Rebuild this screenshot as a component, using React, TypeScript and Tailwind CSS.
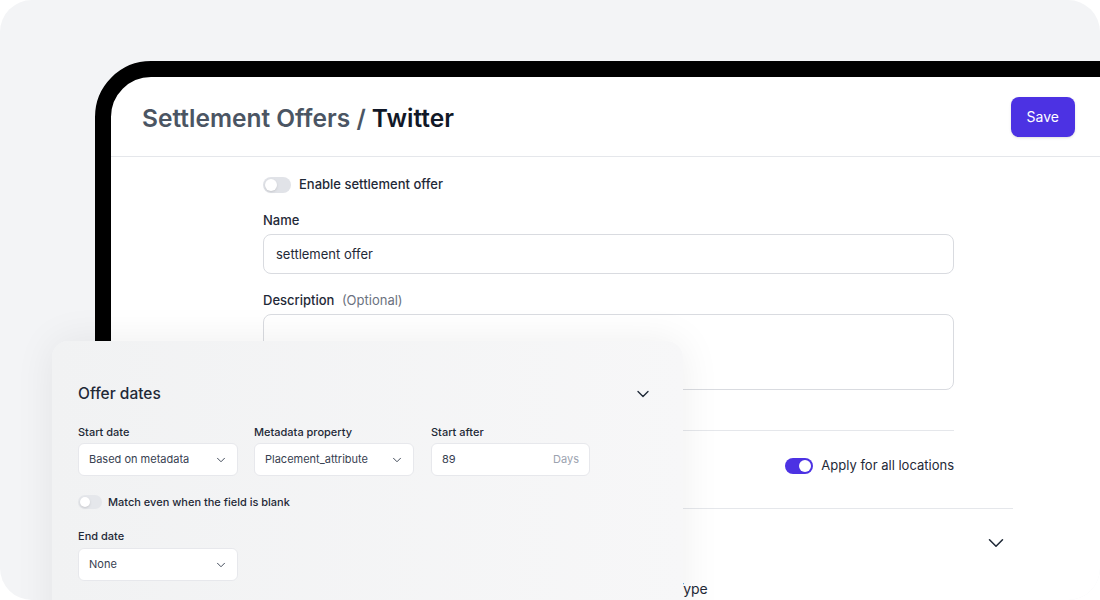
import React from "react";
import { ChevronDown } from "lucide-react";

function Toggle({ on = false, small = false }: { on?: boolean; small?: boolean }) {
  if (small) {
    return (
      <div className="relative h-[14px] w-[24px] shrink-0 rounded-full bg-[#e5e7eb]">
        <div className="absolute left-[2px] top-[2px] h-[10px] w-[10px] rounded-full bg-white shadow-sm" />
      </div>
    );
  }
  return (
    <div
      className={
        on
          ? "relative h-[16px] w-[28px] shrink-0 rounded-full bg-[#4c32e3]"
          : "relative h-[16px] w-[28px] shrink-0 rounded-full bg-[#e1e3e8]"
      }
    >
      <div
        className={
          on
            ? "absolute right-[2px] top-[2px] h-[12px] w-[12px] rounded-full bg-white"
            : "absolute left-[2px] top-[2px] h-[12px] w-[12px] rounded-full bg-white shadow-sm"
        }
      />
    </div>
  );
}

function Select({ value }: { value: string }) {
  return (
    <div className="flex h-[33px] items-center justify-between rounded-md border border-[#e7e8ec] bg-white pl-[10px] pr-[9px] text-[11px] text-[#374151]">
      <span>{value}</span>
      <ChevronDown size={14} strokeWidth={1.6} className="text-[#374151]" />
    </div>
  );
}

export default function App() {
  return (
    <div className="h-[600px] w-[1100px] bg-white font-['Inter',sans-serif]">
      <div className="relative h-full w-full overflow-hidden rounded-[32px] bg-[#f3f4f6]">
        {/* device frame */}
        <div className="ml-[95px] mt-[61px] h-[620px] w-[1040px] rounded-tl-[56px] border-[16px] border-black bg-white">
          <div className="flex h-full flex-col">
            <div className="flex h-[80px] shrink-0 items-center justify-between border-b border-[#e5e7eb] pl-[31px] pr-[44px]">
              <h1 className="pt-[3px] text-[24.5px] font-semibold text-[#4b5563]">
                Settlement Offers / <span className="text-[#111827]">Twitter</span>
              </h1>
              <button className="h-[40px] rounded-lg bg-[#4c32e3] px-4 text-[14px] text-white shadow-sm">
                Save
              </button>
            </div>

            <div className="pl-[152px] pt-[17px]">
              <div className="w-[691px]">
                <div className="flex h-[21px] items-center gap-2 pt-px">
                  <Toggle />
                  <span className="text-[13px] font-medium text-[#1f2937]">Enable settlement offer</span>
                </div>

                <div className="mt-[15px] text-[13px] font-medium leading-[20px] text-[#1f2937]">Name</div>
                <div className="mt-1 flex h-[40px] items-center rounded-lg border border-[#d9dbe0] px-3 pt-px text-[13px] text-[#1f2937]">
                  settlement offer
                </div>

                <div className="mt-4 text-[13px] font-medium leading-[20px] text-[#1f2937]">
                  Description <span className="ml-1 font-normal text-[#6b7280]">(Optional)</span>
                </div>
                <div className="mt-1 h-[76px] rounded-lg border border-[#d9dbe0]" />

                <div className="mt-10 flex h-[78px] items-start justify-end border-t border-[#e5e7eb] pt-[25px]">
                  <div className="flex h-[20px] items-center gap-2">
                    <Toggle on />
                    <span className="text-[13px] text-[#1f2937]">Apply for all locations</span>
                  </div>
                </div>
              </div>

              <div className="w-[750px] border-t border-[#e5e7eb]">
                <div className="flex h-[68px] items-center justify-end pr-[4px]">
                  <ChevronDown size={26} strokeWidth={1.4} className="text-[#1f2937]" />
                </div>
                <div className="pl-[412px] pt-[2px] text-[14px] leading-[20px] text-[#1f2937]">Type</div>
              </div>
            </div>
          </div>
        </div>

        {/* floating card */}
        <div className="absolute left-[52px] top-[341px] h-[300px] w-[631px] rounded-t-[16px] bg-gradient-to-r from-[#f1f2f3] to-[#f7f7f8] pl-[26px] pr-[30px] pt-[41px] shadow-[0_0_40px_rgba(0,0,0,0.07)]">
          <div className="flex h-[24px] items-center justify-between">
            <span className="text-[15.5px] font-medium text-[#1f2937]">Offer dates</span>
            <ChevronDown size={20} strokeWidth={1.6} className="text-[#1f2937]" />
          </div>

          <div className="mt-[17px] grid grid-cols-[160px_160px_160px] gap-x-4">
            <div>
              <div className="pt-px text-[11px] font-medium leading-[16px] text-[#1f2937]">Start date</div>
              <div className="mt-[3px]">
                <Select value="Based on metadata" />
              </div>
            </div>
            <div>
              <div className="pt-px text-[11px] font-medium leading-[16px] text-[#1f2937]">Metadata property</div>
              <div className="mt-[3px]">
                <Select value="Placement_attribute" />
              </div>
            </div>
            <div className="ml-px">
              <div className="pt-px text-[11px] font-medium leading-[16px] text-[#1f2937]">Start after</div>
              <div className="mt-[3px] flex h-[33px] items-center justify-between rounded-md border border-[#e7e8ec] bg-white px-[10px] text-[11px]">
                <span className="text-[#374151]">89</span>
                <span className="text-[#9ca3af]">Days</span>
              </div>
            </div>
          </div>

          <div className="mt-[18px] flex h-[16px] items-center gap-[6px]">
            <Toggle small />
            <span className="text-[11px] font-medium text-[#1f2937]">Match even when the field is blank</span>
          </div>

          <div className="mt-[18px] w-[160px]">
            <div className="text-[11px] font-medium leading-[16px] text-[#1f2937]">End date</div>
            <div className="mt-[4px]">
              <Select value="None" />
            </div>
          </div>
        </div>
      </div>
    </div>
  );
}
